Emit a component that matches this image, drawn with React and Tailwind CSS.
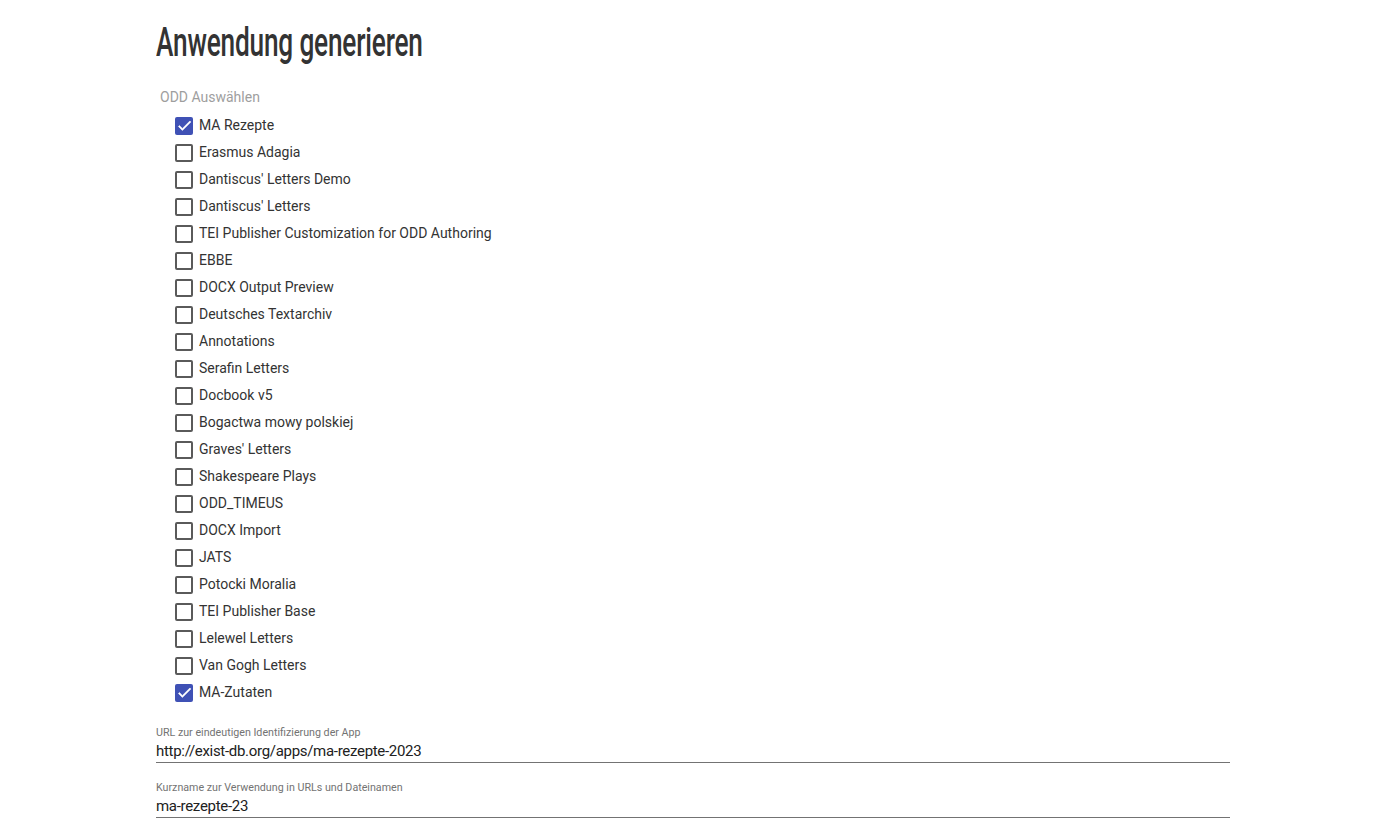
import React from "react";

const items = [
  ["MA Rezepte", true],
  ["Erasmus Adagia", false],
  ["Dantiscus' Letters Demo", false],
  ["Dantiscus' Letters", false],
  ["TEI Publisher Customization for ODD Authoring", false],
  ["EBBE", false],
  ["DOCX Output Preview", false],
  ["Deutsches Textarchiv", false],
  ["Annotations", false],
  ["Serafin Letters", false],
  ["Docbook v5", false],
  ["Bogactwa mowy polskiej", false],
  ["Graves' Letters", false],
  ["Shakespeare Plays", false],
  ["ODD_TIMEUS", false],
  ["DOCX Import", false],
  ["JATS", false],
  ["Potocki Moralia", false],
  ["TEI Publisher Base", false],
  ["Lelewel Letters", false],
  ["Van Gogh Letters", false],
  ["MA-Zutaten", true],
];

function Box({ checked }) {
  if (checked) {
    return (
      <span className="flex h-[18px] w-[18px] items-center justify-center rounded-[2px] bg-[#3f51b5]">
        <svg width="17" height="17" viewBox="0 0 24 24">
          <path d="M9 16.17L4.83 12l-1.42 1.41L9 19 21 7l-1.41-1.41z" fill="white" stroke="white" strokeWidth="0.8" />
        </svg>
      </span>
    );
  }
  return <span className="h-[18px] w-[18px] rounded-[2px] border-2 border-[#5a5a5a]" />;
}

function Field({ label, value }) {
  return (
    <div className="flex flex-col border-b border-[#737373]">
      <span className="text-[10.7px] leading-[14px] text-[#737373]">{label}</span>
      <span className="text-[15px] leading-[22px] tracking-[-0.3px] text-[#212121]">{value}</span>
    </div>
  );
}

export default function App() {
  return (
    <div
      className="min-h-[833px] bg-white pl-[156px]"
      style={{ fontFamily: "Roboto, 'Liberation Sans', sans-serif" }}
    >
      <div className="w-[1074px]">
        <h1 className="h-[66px] pt-[20px]">
          <span
            className="inline-block origin-left scale-x-[0.64] text-[41px] leading-[44px] font-medium text-[#333] tracking-[-0.3px]"
            style={{ fontFamily: "Roboto, sans-serif" }}
          >
            Anwendung generieren
          </span>
        </h1>
        <div className="mt-[22px] pl-[4px] text-[14px] leading-[18px] text-[#9e9e9e]">ODD Auswählen</div>
        <div className="mt-[6px] flex flex-col pl-[19px]">
          {items.map(([name, checked]) => (
            <div key={name} className="flex h-[27px] items-center gap-[6px]">
              <Box checked={checked} />
              <span className="text-[14px] text-[#333]">{name}</span>
            </div>
          ))}
        </div>
        <div className="mt-[20px] flex flex-col gap-[18px]">
          <Field label="URL zur eindeutigen Identifizierung der App" value="http://exist-db.org/apps/ma-rezepte-2023" />
          <Field label="Kurzname zur Verwendung in URLs und Dateinamen" value="ma-rezepte-23" />
        </div>
      </div>
    </div>
  );
}
